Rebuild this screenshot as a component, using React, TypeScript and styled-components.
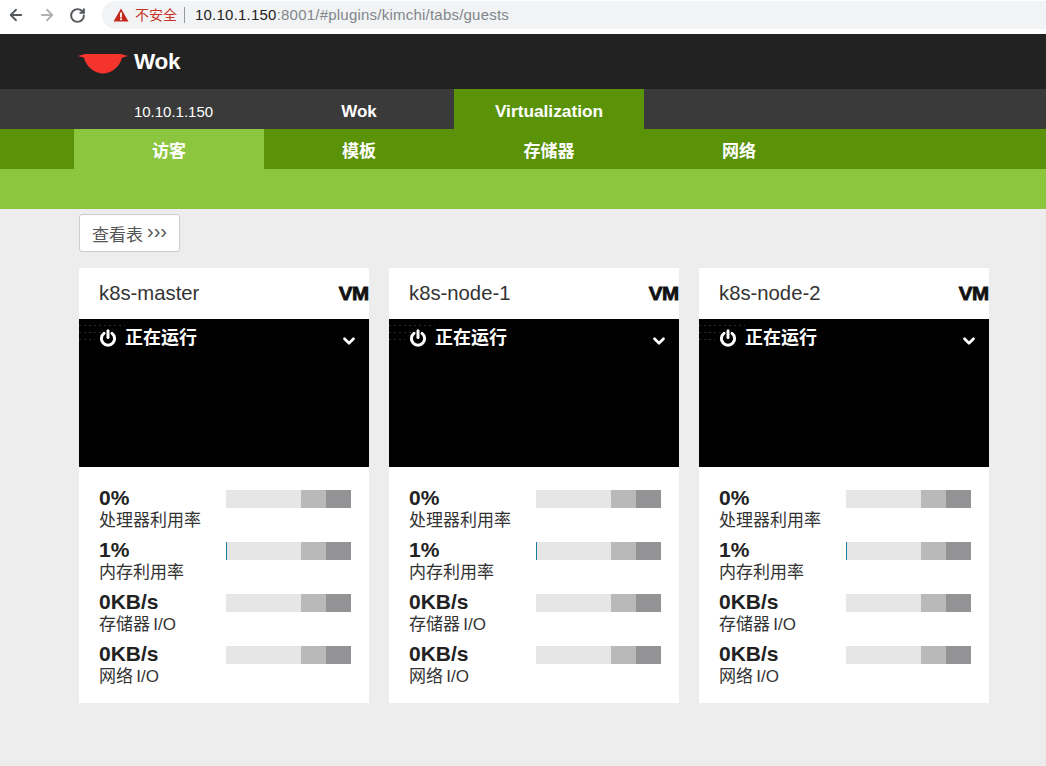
import React from "react";
import styled, { createGlobalStyle } from "styled-components";
import { ArrowLeft, ArrowRight, RotateCw, ChevronDown } from "lucide-react";

const Global = createGlobalStyle`
  *, *::before, *::after { box-sizing: border-box; }
  html, body { margin: 0; padding: 0; height: 100%; overflow: hidden; background: #ededed; }
  body { font-family: "Liberation Sans", "Noto Sans CJK SC", sans-serif; }
`;
const Page = styled.div`width: 1046px; height: 766px; overflow: hidden; display: flex; flex-direction: column;`;
const Chrome = styled.div`
  height: 34px; background: #fff; display: flex; align-items: flex-start; padding: 1px 0 0 7px; flex: none;
`;
const NavIcons = styled.div`display: flex; align-items: center; gap: 13px; width: 95px; height: 28px; flex: none;`;
const Pill = styled.div`
  height: 28px; flex: 1; margin-right: -20px; background: #f2f3f4; border-radius: 14px; display: flex; align-items: center; padding: 0 0 1px 11px; font-size: 15px; letter-spacing: 0.22px; color: #80868b; white-space: nowrap;
`;
const Insecure = styled.span`color: #c5352b; font-size: 14px; letter-spacing: 0; margin-left: 6px; padding-right: 7px; border-right: 1px solid #9a9a9a; line-height: 16px; margin-right: 10px;`;
const Host = styled.span`color: #222;`;
const Brand = styled.div`height: 55px; background: #222; display: flex; align-items: center; padding-left: 78px; gap: 5px; flex: none;`;
const BrandName = styled.span`color: #fff; font-size: 22.5px; font-weight: 700; letter-spacing: -0.3px;`;
const TabBar = styled.div<{ $bg: string }>`height: 40px; background: ${p => p.$bg}; display: flex; padding-left: 74px; flex: none;`;
const Tab = styled.div<{ $bg?: string; $bold?: boolean; $size?: number; $down?: number; $right?: number }>`
  width: 190px; display: flex; align-items: center; justify-content: center; color: #fff;
  background: ${p => p.$bg || "transparent"};
  font-weight: ${p => (p.$bold ? 700 : 400)};
  font-size: ${p => p.$size || 17}px;
  padding-top: ${p => p.$down || 0}px;
  padding-left: ${p => p.$right || 0}px;
`;
const Strip = styled.div`height: 40px; background: #8cc63f; flex: none;`;
const Content = styled.div`padding: 5px 0 0 79px; flex: 1;`;
const ViewButton = styled.div`
  width: 101px; height: 38px; background: #fff; border: 1px solid #ccc; border-radius: 3px; display: flex; align-items: center; padding-left: 12px; gap: 4px; color: #555; font-size: 17px; white-space: nowrap;
`;
const Arrows = styled.span`letter-spacing: 0; font-size: 20px; line-height: 17px; padding-bottom: 3px;`;
const Cards = styled.div`display: flex; gap: 20px; margin-top: 16px;`;
const Card = styled.div`width: 290px; height: 435px; background: #fff; display: flex; flex-direction: column;`;
const CardHead = styled.div`height: 51px; display: flex; align-items: center; justify-content: space-between; padding: 0 1px 0 20px; flex: none;`;
const CardName = styled.span`font-size: 20.3px; color: #333;`;
const VmMark = styled.span`font-size: 19px; font-weight: 700; color: #111; -webkit-text-stroke: 0.8px #111; transform: scaleX(1.08); transform-origin: right; letter-spacing: -0.5px;`;
const Screen = styled.div`height: 148px; background: #000; flex: none; position: relative; display: flex; align-items: flex-start; justify-content: space-between; padding: 8px 11px 0 20px; color: #fff;`;
const Console = styled.svg`position: absolute; left: 0; top: 2px;`;
const Status = styled.div`display: flex; align-items: center; gap: 8px; font-size: 18px; font-weight: 700; line-height: 22px; position: relative;`;
const Chevron = styled.div`margin-top: 5px; display: flex; position: relative;`;
const Stats = styled.div`padding: 19px 18px 0 20px; display: flex; flex-direction: column; gap: 6px;`;
const Stat = styled.div`height: 46px; display: flex; justify-content: space-between;`;
const StatText = styled.div`display: flex; flex-direction: column;`;
const StatValue = styled.div`font-size: 21px; font-weight: 700; color: #222; line-height: 24px;`;
const StatLabel = styled.div`font-size: 17px; color: #333; line-height: 21px; white-space: nowrap; word-spacing: -1.5px;`;
const Meter = styled.div`width: 125px; height: 18px; margin-top: 4px; display: flex; position: relative; flex: none;`;
const Seg = styled.div<{ $w: number; $c: string }>`width: ${p => p.$w}px; background: ${p => p.$c};`;
const Fill = styled.div`position: absolute; left: 0; top: 0; bottom: 0; width: 1px; background: #1a7f9c;`;

const PowerIcon = () => (
  <svg width="18" height="18" viewBox="0 0 18 18" fill="none" stroke="#fff" strokeWidth="3" strokeLinecap="round">
    <path d="M5 4.4 A6.6 6.6 0 1 0 13 4.4" />
    <path d="M9 1.8 V8.4" />
  </svg>
);
const ConsoleDots = () => (
  <Console width="50" height="26" viewBox="0 0 50 26" stroke="#2c2c2c" strokeWidth="1" strokeDasharray="2 3">
    <path d="M0 4.5 H46" />
    <path d="M0 11.5 H28" />
    <path d="M0 18.5 H16" />
  </Console>
);
const WokLogo = () => (
  <svg width="51" height="26" viewBox="0 0 51 26">
    <path d="M0 7 L7 5 H43 L50 7 L44 8.8 C42 18 33 24.5 25 24.5 C17 24.5 8 18 6 8.8 Z" fill="#f5342e" />
  </svg>
);
const Warn = () => (
  <svg width="16" height="14" viewBox="0 0 16 14">
    <path d="M8 0.5 L15.5 13.5 H0.5 Z" fill="#c5281c" />
    <rect x="7.1" y="4.5" width="1.8" height="5" fill="#fff" />
    <rect x="7.1" y="10.3" width="1.8" height="1.8" fill="#fff" />
  </svg>
);

const stats = [
  { value: "0%", label: "处理器利用率", fill: false },
  { value: "1%", label: "内存利用率", fill: true },
  { value: "0KB/s", label: "存储器 I/O", fill: false },
  { value: "0KB/s", label: "网络 I/O", fill: false },
];

const GuestCard = ({ name }: { name: string }) => (
  <Card>
    <CardHead>
      <CardName>{name}</CardName>
      <VmMark>VM</VmMark>
    </CardHead>
    <Screen>
      <ConsoleDots />
      <Status>
        <PowerIcon />
        正在运行
      </Status>
      <Chevron>
        <ChevronDown size={18} strokeWidth={3.6} color="#fff" />
      </Chevron>
    </Screen>
    <Stats>
      {stats.map(s => (
        <Stat key={s.label}>
          <StatText>
            <StatValue>{s.value}</StatValue>
            <StatLabel>{s.label}</StatLabel>
          </StatText>
          <Meter>
            <Seg $w={75} $c="#e6e6e6" />
            <Seg $w={25} $c="#b9b9b9" />
            <Seg $w={25} $c="#939396" />
            {s.fill && <Fill />}
          </Meter>
        </Stat>
      ))}
    </Stats>
  </Card>
);

export default function App() {
  return (
    <Page>
      <Global />
      <Chrome>
        <NavIcons>
          <ArrowLeft size={18} color="#54585c" strokeWidth={2.4} />
          <ArrowRight size={18} color="#b0b3b6" strokeWidth={2.4} />
          <RotateCw size={17} color="#54585c" strokeWidth={2.8} />
        </NavIcons>
        <Pill>
          <Warn />
          <Insecure>不安全</Insecure>
          <Host>10.10.1.150</Host>:8001/#plugins/kimchi/tabs/guests
        </Pill>
      </Chrome>
      <Brand>
        <WokLogo />
        <BrandName>Wok</BrandName>
      </Brand>
      <TabBar $bg="#3a3a3a">
        <Tab $size={15} $down={4} $right={9}>10.10.1.150</Tab>
        <Tab $bold $down={5}>Wok</Tab>
        <Tab $bold $size={17.3} $down={4} $bg="#5a9208">Virtualization</Tab>
      </TabBar>
      <TabBar $bg="#5a9208">
        <Tab $bold $bg="#8cc63f">访客</Tab>
        <Tab $bold>模板</Tab>
        <Tab $bold>存储器</Tab>
        <Tab $bold>网络</Tab>
      </TabBar>
      <Strip />
      <Content>
        <ViewButton>查看表 <Arrows>›››</Arrows></ViewButton>
        <Cards>
          <GuestCard name="k8s-master" />
          <GuestCard name="k8s-node-1" />
          <GuestCard name="k8s-node-2" />
        </Cards>
      </Content>
    </Page>
  );
}
